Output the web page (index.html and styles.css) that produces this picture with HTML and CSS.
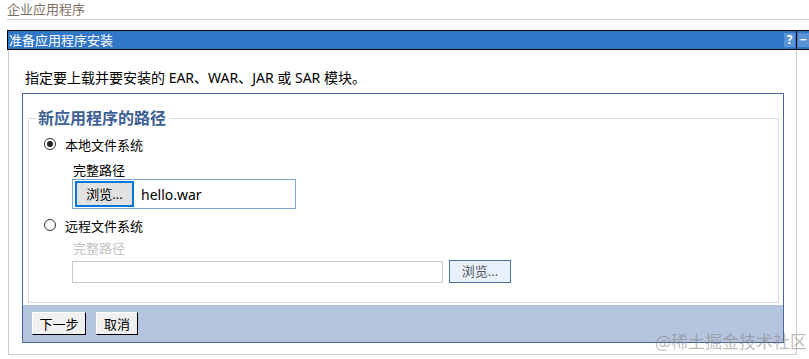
FILE: index.html
```
<!DOCTYPE html>
<html lang="zh-CN">
<head>
    <meta charset="UTF-8">
    <title>企业应用程序</title>
    <link rel="stylesheet" href="styles.css">
</head>
<body>
    <div class="page-title">企业应用程序</div>

    <div class="portlet">
        <div class="portlet-bar">
            <span class="bar-title">准备应用程序安装</span>
            <span class="bar-icon">?</span>
            <span class="bar-sep"></span>
            <span class="bar-icon minus">&minus;</span>
        </div>
        <div class="portlet-body">
            <p class="intro">指定要上载并要安装的 EAR、WAR、JAR 或 SAR 模块。</p>
            <div class="wizard">
                <fieldset class="path-set">
                    <legend>新应用程序的路径</legend>
                    <div class="radio-row first">
                        <span class="radio checked"></span>
                        <span>本地文件系统</span>
                    </div>
                    <div class="field-label">完整路径</div>
                    <div class="file-input">
                        <span class="file-btn">浏览...</span>
                        <span class="file-name">hello.war</span>
                    </div>
                    <div class="radio-row">
                        <span class="radio"></span>
                        <span>远程文件系统</span>
                    </div>
                    <div class="field-label disabled">完整路径</div>
                    <div class="remote-row">
                        <span class="remote-input"></span>
                        <span class="browse-btn">浏览...</span>
                    </div>
                </fieldset>
                <div class="wizard-foot">
                    <button class="btn btn-next">下一步</button>
                    <button class="btn btn-cancel">取消</button>
                </div>
            </div>
        </div>
    </div>

    <div class="watermark">@稀土掘金技术社区</div>
</body>
</html>
```

FILE: styles.css
```
/* 基本样式 */
body {
    margin: 0;
    padding: 0;
    font-family: "Noto Sans", "Noto Sans CJK SC", sans-serif;
    font-size: 13px;
    color: #000;
    background: #fff;
    overflow: hidden;
    width: 809px;
    height: 359px;
    position: relative;
}
.page-title {
    margin-left: 7px;
    height: 19px;
    line-height: 18px;
    color: #7d7064;
    border-bottom: 1px solid #cfcfcf;
}
.portlet {
    margin: 10px 0 0 7px;
    width: 790px;
}
.portlet-bar {
    display: flex;
    align-items: center;
    width: 815px;
    height: 18px;
    background: #3177c8;
    border: 1px solid #000;
    color: #fff;
}
.bar-title {
    flex: 1;
    padding-left: 1px;
    line-height: 18px;
}
.bar-icon {
    width: 11px;
    height: 14px;
    margin-right: 1px;
    background: #5a93d6;
    color: #fff;
    font-size: 12px;
    font-weight: bold;
    line-height: 14px;
    text-align: center;
}
.bar-sep {
    width: 1px;
    height: 18px;
    background: #000;
    margin-right: 1px;
}
.bar-icon.minus {
    margin-right: 14px;
}
.portlet-body {
    border: 1px solid #cccccc;
    border-top: none;
    margin-left: 1px;
    height: 304px;
    padding: 0 12px 0 13px;
}
.intro {
    margin: 0;
    padding: 19px 0 0 3px;
    height: 24px;
    line-height: 17px;
    font-size: 14px;
}
.wizard {
    border: 1px solid #4b63a0;
    height: 248px;
    display: flex;
    flex-direction: column;
}
.path-set {
    margin: 15px 4px 0 5px;
    padding: 0 0 0 16px;
    border: 1px solid #dddddd;
    height: 194px;
    flex: none;
    box-sizing: border-box;
}
.path-set legend {
    margin-left: -9px;
    padding: 0 3px 0 2px;
    font-size: 16px;
    font-weight: bold;
    color: #3c5f96;
    line-height: 18px;
}
.radio-row {
    display: flex;
    align-items: center;
    height: 20px;
    margin-top: 6px;
}
.radio-row.first {
    margin-top: 7px;
}
.radio {
    width: 10px;
    height: 10px;
    border: 1px solid #333;
    border-radius: 50%;
    margin: 0 9px 0 -1px;
    position: relative;
    background: #fff;
}
.radio.checked::after {
    content: "";
    position: absolute;
    left: 2px;
    top: 2px;
    width: 6px;
    height: 6px;
    border-radius: 50%;
    background: #222;
}
.field-label {
    margin: 8px 0 0 28px;
    height: 17px;
    line-height: 17px;
}
.field-label.disabled {
    color: #c4c4c4;
    margin-top: 5px;
}
.file-input {
    margin-left: 27px;
    width: 222px;
    height: 28px;
    border: 1px solid #7fa6cd;
    display: flex;
    align-items: center;
}
.file-btn {
    margin-left: 2px;
    width: 55px;
    height: 22px;
    border: 2px solid #0078d7;
    background: #e1e1e1;
    text-align: center;
    line-height: 22px;
}
.file-name {
    margin-left: 7px;
    font-size: 14px;
}
.remote-row {
    display: flex;
    align-items: flex-start;
    margin: 3px 0 0 27px;
    height: 23px;
}
.remote-input {
    margin-top: 1px;
    width: 369px;
    height: 20px;
    border: 1px solid #c8c8c8;
}
.browse-btn {
    margin-left: 6px;
    width: 60px;
    height: 21px;
    border: 1px solid #4f6f9c;
    background: #e8f0fc;
    color: #555;
    text-align: center;
    line-height: 21px;
}
.wizard-foot {
    margin-top: auto;
    height: 37px;
    flex: none;
    background: #b5c5de;
    display: flex;
    align-items: flex-start;
    padding: 7px 0 0 9px;
    box-sizing: border-box;
}
.btn {
    font-family: "Noto Sans CJK SC", sans-serif;
    font-size: 13px;
    background: #f0f0f0;
    border: 1px solid;
    border-color: #fff #000 #000 #fff;
    height: 23px;
    padding: 0;
    margin-right: 10px;
    line-height: 19px;
    white-space: nowrap;
}
.btn-next {
    width: 54px;
}
.btn-cancel {
    width: 42px;
}
.watermark {
    position: absolute;
    right: 2px;
    bottom: 6px;
    font-size: 17px;
    color: rgba(130, 130, 130, 0.55);
    font-family: "Noto Sans CJK SC", sans-serif;
}
```
